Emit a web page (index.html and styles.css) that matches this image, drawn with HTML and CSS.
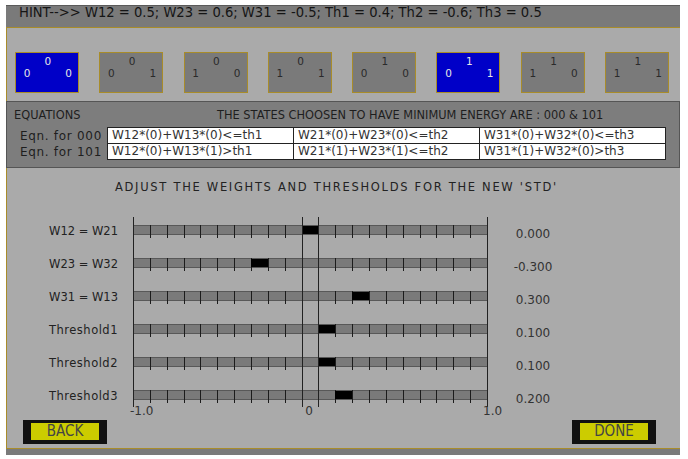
FILE: index.html
```html
<!DOCTYPE html>
<html>
<head>
<meta charset="utf-8">
<link rel="stylesheet" href="styles.css">
</head>
<body>
<div class="app">
  <header class="hint"><span class="hint-text">HINT--&gt;&gt; W12 = 0.5; W23 = 0.6; W31 = -0.5; Th1 = 0.4; Th2 = -0.6; Th3 = 0.5</span></header>
  <main class="main">
    <section class="states">
      <div class="state sel"><div class="s-top">0</div><div class="s-bot"><span>0</span><span>0</span></div></div>
      <div class="state"><div class="s-top">0</div><div class="s-bot"><span>0</span><span>1</span></div></div>
      <div class="state"><div class="s-top">0</div><div class="s-bot"><span>1</span><span>0</span></div></div>
      <div class="state"><div class="s-top">0</div><div class="s-bot"><span>1</span><span>1</span></div></div>
      <div class="state"><div class="s-top">1</div><div class="s-bot"><span>0</span><span>0</span></div></div>
      <div class="state sel"><div class="s-top">1</div><div class="s-bot"><span>0</span><span>1</span></div></div>
      <div class="state"><div class="s-top">1</div><div class="s-bot"><span>1</span><span>0</span></div></div>
      <div class="state"><div class="s-top">1</div><div class="s-bot"><span>1</span><span>1</span></div></div>
    </section>
    <section class="equations">
      <div class="eq-head">
        <span class="eq-title">EQUATIONS</span>
        <span class="eq-note">THE STATES CHOOSEN TO HAVE MINIMUM ENERGY ARE : 000 &amp; 101</span>
      </div>
      <div class="eq-body">
        <div class="eq-labels">
          <div>Eqn. for 000</div>
          <div>Eqn. for 101</div>
        </div>
        <div class="eq-table">
          <div>W12*(0)+W13*(0)&lt;=th1</div>
          <div>W21*(0)+W23*(0)&lt;=th2</div>
          <div>W31*(0)+W32*(0)&lt;=th3</div>
          <div>W12*(0)+W13*(1)&gt;th1</div>
          <div>W21*(1)+W23*(1)&lt;=th2</div>
          <div>W31*(1)+W32*(0)&gt;th3</div>
        </div>
      </div>
    </section>
    <section class="adjust">
      <h2 class="adjust-title">ADJUST THE WEIGHTS AND THRESHOLDS FOR THE NEW 'STD'</h2>
      <div class="sliders">
        <svg class="chart" width="355" height="201" viewBox="0 0 355 201">
          <defs>
            <g id="trk">
              <rect x="0" y="0" width="354" height="10" fill="#7a7a7a"/>
              <path d="M0 0.5H354M0 9.5H354" stroke="#585858" stroke-width="1"/>
              <path d="M17.5 0V13M34.5 0V13M51.5 0V13M67.5 0V13M84.5 0V13M101.5 0V13M118.5 0V13M135.5 0V13M152.5 0V13M202.5 0V13M219.5 0V13M236.5 0V13M253.5 0V13M270.5 0V13M287.5 0V13M303.5 0V13M320.5 0V13M337.5 0V13" stroke="#1c1c1c" stroke-width="1"/>
            </g>
          </defs>
          <use href="#trk" x="0" y="8"/>
          <use href="#trk" x="0" y="41"/>
          <use href="#trk" x="0" y="74"/>
          <use href="#trk" x="0" y="107"/>
          <use href="#trk" x="0" y="140"/>
          <use href="#trk" x="0" y="173"/>
          <rect x="169" y="9" width="16" height="8" fill="#000"/>
          <rect x="118" y="42" width="17" height="8" fill="#000"/>
          <rect x="219" y="75" width="17" height="8" fill="#000"/>
          <rect x="185" y="108" width="17" height="8" fill="#000"/>
          <rect x="185" y="141" width="17" height="8" fill="#000"/>
          <rect x="202" y="174" width="17" height="8" fill="#000"/>
          <path d="M0.5 0V190M169.5 0V190M185.5 0V190M354.5 0V190" stroke="#222" stroke-width="1"/>
          <text class="axis" x="-3" y="198">-1.0</text>
          <text class="axis" x="176" y="198" text-anchor="middle">0</text>
          <text class="axis" x="350" y="198">1.0</text>
        </svg>
        <div class="s-label">W12 = W21</div><div class="s-value">0.000</div>
        <div class="s-label">W23 = W32</div><div class="s-value">-0.300</div>
        <div class="s-label">W31 = W13</div><div class="s-value">0.300</div>
        <div class="s-label th">Threshold1</div><div class="s-value">0.100</div>
        <div class="s-label th">Threshold2</div><div class="s-value">0.100</div>
        <div class="s-label th">Threshold3</div><div class="s-value">0.200</div>
      </div>
      <div class="buttons">
        <div class="btn"><span>BACK</span></div>
        <div class="btn"><span>DONE</span></div>
      </div>
    </section>
  </main>
  <div class="foot"></div>
</div>
</body>
</html>
```
FILE: styles.css
```css
* { box-sizing: border-box; }

body {
  margin: 0;
  background: #ffffff;
  font-family: "DejaVu Sans", "Liberation Sans", sans-serif;
  color: #222;
}

.app {
  margin: 5px 0 0 6px;
  width: 674px;
}

.hint {
  display: block;
  height: 23px;
  background: #7a7a7a;
  border-top: 1px solid #5a5a5a;
  border-bottom: 1px solid #a88c2a;
  overflow: hidden;
  padding-left: 13px;
}

.hint-text {
  display: block;
  font-family: "DejaVu Sans Condensed", "DejaVu Sans", sans-serif;
  font-size: 14.6px;
  line-height: 15px;
  margin-top: -2px;
  color: #151515;
  white-space: nowrap;
}

.main {
  display: block;
  background: #aaaaaa;
  border-left: 1px solid #a88c2a;
  border-bottom: 1px solid #a88c2a;
}

.states {
  height: 73px;
  padding: 24px 0 0 8px;
  display: flex;
  gap: 20.3px;
}

.state {
  width: 64px;
  height: 41px;
  flex: none;
  border: 1px solid #a88c2a;
  background: #7a7a7a;
  color: #2a2a2a;
  font-size: 10.5px;
  line-height: 12px;
  padding: 1.5px 6.15px 0 7.65px;
}

.state.sel {
  background: #0000c8;
  color: #e6e6e6;
}

.s-top { text-align: center; }

.s-bot {
  display: flex;
  justify-content: space-between;
}

.equations {
  height: 67px;
  margin-left: -1px;
  border: 1px solid #555;
  background: #7d7d7d;
}

.eq-head {
  display: flex;
  align-items: center;
  height: 25px;
  padding-left: 7px;
  font-size: 11.4px;
  color: #1e1e1e;
  white-space: nowrap;
}

.eq-title { width: 203px; flex: none; }

.eq-body {
  display: flex;
  gap: 5px;
}

.eq-labels {
  width: 95px;
  text-align: right;
  font-size: 12px;
  letter-spacing: 0.7px;
  color: #1e1e1e;
}

.eq-labels div {
  height: 16px;
  line-height: 16px;
  padding-top: 1px;
  white-space: nowrap;
}

.eq-table {
  display: grid;
  grid-template-columns: repeat(3, 186px);
  width: 559px;
  border-left: 1px solid #222;
  border-top: 1px solid #222;
  background: #ffffff;
}

.eq-table div {
  height: 16px;
  border-right: 1px solid #222;
  border-bottom: 1px solid #222;
  padding-left: 4px;
  font-size: 12px;
  line-height: 15px;
  color: #333;
  white-space: nowrap;
}

.adjust {
  height: 280px;
  padding-top: 12px;
}

.adjust-title {
  margin: 0;
  padding-left: 108px;
  font-size: 11.5px;
  line-height: 14px;
  font-weight: normal;
  letter-spacing: 1.7px;
  color: #222;
  white-space: nowrap;
}

.sliders {
  display: grid;
  grid-template-columns: 111px 355px 60px;
  grid-template-rows: repeat(6, 33px) 3px;
  column-gap: 15px;
  margin-top: 23px;
}

.chart {
  grid-column: 2;
  grid-row: 1 / 8;
  overflow: visible;
  display: block;
}

.axis {
  font-family: "DejaVu Sans", sans-serif;
  font-size: 12px;
  fill: #333;
}

.s-label {
  grid-column: 1;
  text-align: right;
  font-size: 11.5px;
  line-height: 14px;
  padding-top: 7px;
  color: #222;
  white-space: nowrap;
}

.s-label.th { letter-spacing: 0.5px; }

.s-value {
  grid-column: 3;
  text-align: center;
  font-size: 12px;
  line-height: 14px;
  padding-top: 9.5px;
  color: #333;
  white-space: nowrap;
}

.buttons {
  display: flex;
  justify-content: space-between;
  padding: 0 24px 0 16px;
  margin-top: 2px;
}

.btn {
  background: #111;
  padding: 3px 8px 4px;
}

.btn span {
  display: block;
  width: 68px;
  height: 17px;
  background: #cccc00;
  color: #444;
  font-family: "DejaVu Sans Condensed", "DejaVu Sans", sans-serif;
  font-size: 15px;
  line-height: 17px;
  text-align: center;
}

.foot {
  height: 6px;
  background: #7a7a7a;
}
```
